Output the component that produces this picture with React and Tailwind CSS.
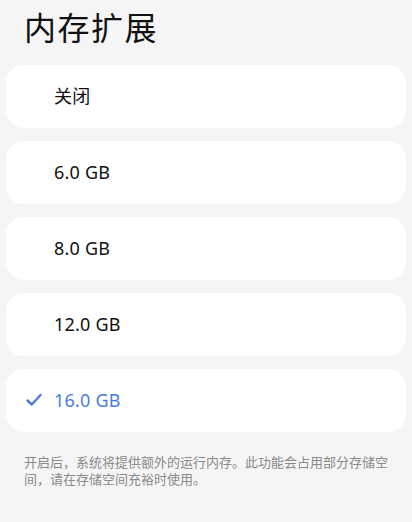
export default function App() {
  const items = ["关闭", "6.0 GB", "8.0 GB", "12.0 GB", "16.0 GB"];
  const selected = 4;
  return (
    <div
      className="w-[412px] h-[522px] bg-[#f5f5f5] overflow-hidden"
      style={{ fontFamily: '"Noto Sans", "Noto Sans CJK SC", sans-serif' }}
    >
      <div className="pl-6 pt-[6px] h-[65px]">
        <h1 className="text-[32px] leading-[44px] text-[#111] font-normal tracking-[1.5px]">内存扩展</h1>
      </div>
      <div className="flex flex-col gap-[13px] px-[6px]">
        {items.map((t, i) => (
          <div
            key={t}
            className="h-[63px] bg-white rounded-[18px] flex items-center relative"
          >
            {i === selected && (
              <svg
                className="absolute left-[20px] top-[24px]"
                width="16"
                height="14"
                viewBox="0 0 16 14"
                fill="none"
              >
                <path
                  d="M1.5 7.5 L5.8 11.5 L14.5 2"
                  stroke="#4a7de0"
                  strokeWidth="2.4"
                  strokeLinecap="round"
                  strokeLinejoin="round"
                />
              </svg>
            )}
            <span
              className={
                "pl-[48px] text-[18px] tracking-[0.2px] " +
                (i === selected ? "text-[#4a7de0]" : "text-[#111]")
              }
            >
              {t}
            </span>
          </div>
        ))}
      </div>
      <p className="px-6 pt-[22px] text-[13px] leading-[17px] text-[#8a8a8a]">
        开启后，系统将提供额外的运行内存。此功能会占用部分存储空间，请在存储空间充裕时使用。
      </p>
    </div>
  );
}
